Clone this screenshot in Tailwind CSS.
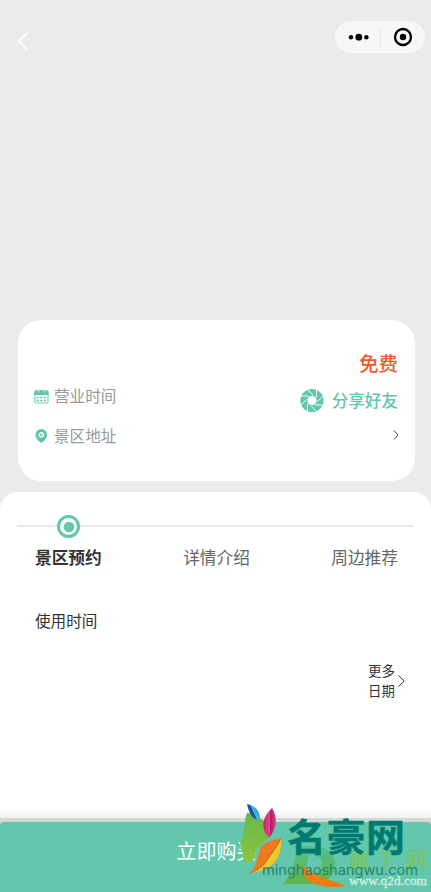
<!DOCTYPE html>
<html lang="zh-CN">
<head>
<meta charset="utf-8">
<meta name="viewport" content="width=device-width, initial-scale=1">
<title>景区预约</title>
<script src="https://cdn.jsdelivr.net/npm/@tailwindcss/browser@4"></script>
</head>
<body class="bg-[#ebebeb]">
<div class="relative flex h-[892px] w-[431px] flex-col overflow-hidden bg-[#ebebeb] font-['Noto_Sans_CJK_SC',sans-serif]">
  <header class="flex h-[320px] shrink-0 items-start justify-between pt-[21px] pr-[6px] pl-[17px]">
    <svg class="mt-[10px] h-5 w-3" viewBox="0 0 12 20" fill="none" stroke="#fff" stroke-width="1.7"><path d="M10.5 1.5 2 10l8.500 8.500"/></svg>
    <div class="flex h-8 w-[90px] items-center rounded-full bg-[#f7f7f7]">
      <svg class="h-8 w-[90px]" viewBox="0 0 90 32"><circle cx="16" cy="16.300" r="2.200"/><circle cx="23.800" cy="16.200" r="3.400"/><circle cx="31.400" cy="16.300" r="2.200"/><path d="M45.500 6v20" stroke="#e6e6e6"/><circle cx="68" cy="16" r="8" fill="none" stroke="#000" stroke-width="2.300"/><circle cx="68" cy="16" r="3.200"/></svg>
    </div>
  </header>

  <section class="mr-4 ml-[18px] flex h-[161px] shrink-0 flex-col rounded-[23px] bg-white pr-[17px] pl-4 pt-[28px]">
    <div class="flex h-[30px] items-center justify-end text-[19.500px] leading-[30px] font-medium text-[#ea5a2b]">免费</div>
    <div class="mt-[2px] flex h-10 items-center justify-between">
      <div class="flex -translate-y-[5px] items-center text-[15.600px] leading-6 font-normal text-[#999]">
        <svg class="mr-[5px] h-[15px] w-[15px] translate-y-px" viewBox="0 0 15 15"><rect x=".8" y="1.800" width="13.200" height="12.200" rx="1.500" fill="#fff" stroke="#7fd1bd" stroke-width="1.200"/><path d="M.3 6V3Q.3 1.500 2 1.500h11q1.500 0 1.500 1.500v3z" fill="#5fc6ac"/><path d="M4.500 0v3.500M10.500 0v3.500" stroke="#b8e6db" stroke-width="1.400"/><path d="M2.500 8.500h10M2.500 11.500h10" stroke="#6bcab2" stroke-width="1.700" stroke-dasharray="2.300 1.300"/></svg>营业时间
      </div>
      <div class="flex items-center text-[16.600px] leading-6 font-medium text-[#62c7ad]">
        <svg class="mr-2 h-6 w-6 translate-y-[.5px]" viewBox="-12 -12 24 24"><circle r="8.100" fill="none" stroke="#62c7ad" stroke-width="7"/><g stroke="#fff" stroke-width=".9"><path id="b" d="M4.500-3V-12"/><use href="#b" transform="rotate(45)"/><use href="#b" transform="rotate(90)"/><use href="#b" transform="rotate(135)"/><use href="#b" transform="rotate(180)"/><use href="#b" transform="rotate(225)"/><use href="#b" transform="rotate(270)"/><use href="#b" transform="rotate(315)"/></g></svg>分享好友
      </div>
    </div>
    <div class="flex h-[30px] items-center justify-between">
      <div class="flex items-center text-[15.600px] leading-6 font-normal text-[#999]">
        <svg class="mr-[5px] h-[15px] w-[15px] translate-y-[.5px]" viewBox="0 0 15 15"><path d="M7.300.5a5.900 5.900 0 0 1 5.900 5.900c0 3.100-3.200 6-5.900 8.100C4.600 12.400 1.400 9.500 1.400 6.400A5.900 5.900 0 0 1 7.300.5z" fill="#5fc6ac"/><circle cx="7.300" cy="6.300" r="2.100" fill="#7fd1bd" stroke="#fff" stroke-width="1.200"/></svg>景区地址
      </div>
      <svg class="-mr-px h-[10px] w-[6px]" viewBox="0 0 6 10" fill="none" stroke="#444"><path d="M1 .5 5 5 1 9.500"/></svg>
    </div>
  </section>

  <main class="mt-[11px] flex h-[400px] shrink-0 flex-col rounded-t-[18px] bg-white pt-[22px]">
    <div class="ml-[17px] flex h-6 w-[397px] items-center bg-[linear-gradient(#e9e9e9,#e9e9e9)] bg-[length:100%_2px] bg-[position:0_11px] bg-no-repeat pl-[39px]">
      <svg class="h-6 w-6" viewBox="0 0 24 24"><circle cx="12.500" cy="12.500" r="10" fill="#fff" stroke="#62c7ad" stroke-width="3"/><circle cx="13" cy="13" r="5.300" fill="#62c7ad"/></svg>
    </div>
    <nav class="mt-[7px] flex h-6 items-center justify-between pr-[33px] pl-[35px] text-[16.700px] leading-6 text-[#666]">
      <b class="font-bold text-[#333]">景区预约</b><span>详情介绍</span><span>周边推荐</span>
    </nav>
    <h2 class="mt-[39px] pl-[35px] text-[15.600px] leading-6 text-[#333]">使用时间</h2>
    <div class="mt-[28px] flex items-center justify-end gap-[3px] pr-[26px]">
      <p class="w-[27px] text-[13.400px] leading-5 text-[#333]">更多<br>日期</p>
      <svg class="h-3 w-[7px] translate-y-px" viewBox="0 0 7 12" fill="none" stroke="#333"><path d="M.5.500 6.200 6 .5 11.500"/></svg>
    </div>
  </main>

  <footer class="absolute inset-x-0 bottom-0 h-[84px]">
    <div class="h-[10px] bg-linear-to-b from-white to-[#f0f2f1]"></div>
    <div class="h-[74px] bg-[#d2dad7] pt-1">
      <button class="flex h-[70px] w-full justify-center rounded-t-[4px] bg-[#62c7ad] pt-[14px] pl-[2px] text-[20px] leading-[30px] text-white">立即购买</button>
    </div>
  </footer>

  <svg class="absolute top-[795px] left-[235px] h-[97px] w-[196px]" viewBox="235 795 196 97">
    <defs>
      <linearGradient id="face" x2="0" y2="1"><stop stop-color="#6ab84c"/><stop offset="1" stop-color="#8ac53c"/></linearGradient>
      <linearGradient id="blue" x1="0" y1=".8" x2="1" y2=".2"><stop stop-color="#124d91"/><stop offset=".48" stop-color="#15569b"/><stop offset=".54" stop-color="#45bce3"/><stop offset="1" stop-color="#1679bb"/></linearGradient>
      <linearGradient id="pink"><stop stop-color="#d3186f"/><stop offset=".5" stop-color="#e0468a"/><stop offset=".56" stop-color="#b01d68"/><stop offset="1" stop-color="#dc3a81"/></linearGradient>
      <linearGradient id="shape" x2="0" y2="1"><stop stop-color="#52bf94"/><stop offset="1" stop-color="#63b441"/></linearGradient>
    </defs>
    <path d="M293 846h16c16 0 26 6 26 18 0 13-9 20-25 20h-27c8-8 12-24 14-34zM309 855l-5 19c11 1 18-3 18-10 0-6-4-9-13-9" fill="url(#shape)" fill-rule="evenodd"/>
    <path d="M301 865c5 2 8 6 13 9 9 5 20 6 32 12-12 2-26 1-35-4-6-3-9-9-10-17" fill="#f27c11"/>
    <path d="M247 813c3-1 7 3 11 5 5 1 9 5 10 9l1 10-5 5c-5 4-8 7-9 12-1 5-2 8-5 8l-6-1-1-4-1-1 1-3-2-3 1-4-2-3 4-8-1-4c3-5 1-11 4-18" fill="url(#face)"/>
    <path d="M247 804c9 2 13 7 13 17-8-2-11-8-13-17" fill="url(#blue)"/>
    <path d="M272 808c6 10 5 20-3 30-8-9-8-20 3-30" fill="url(#pink)"/>
    <path d="M281 838c1 20-7 32-31 35 9-10 7-20 12-27 4-5 12-6 19-8" fill="#ee7a20"/>
    <path d="M281 838c1 20-7 32-31 35 12-4 15-10 20-17 4-6 8-11 11-18" fill="#f0c92d"/>
    <path d="M281 838c-3 7-7 12-11 18-5 7-8 13-20 17" fill="none" stroke="#b55316" stroke-width=".7"/>
    <g font-family="'Noto Sans CJK SC',sans-serif" font-size="21" fill="#7fc257">
      <text x="349" y="868">趣</text><text x="377" y="867" font-size="19">丁</text><text x="406" y="867">网</text>
    </g>
    <text transform="translate(287 851) scale(1 .97)" font-family="'Noto Sans CJK SC',sans-serif" font-size="39" font-weight="700" textLength="118" fill="#007a70" stroke="#007a70" stroke-width=".5">名豪网</text>
    <text x="262" y="875" font-family="Inter,sans-serif" font-size="14" textLength="156" lengthAdjust="spacingAndGlyphs" fill="#25836e">minghaoshangwu.com</text>
    <text x="349" y="885" font-family="'Liberation Serif',serif" font-size="13.500" textLength="78" lengthAdjust="spacingAndGlyphs" fill="#d9eee6" stroke="#d9eee6" stroke-width=".3">www.q2d.com</text>
  </svg>
</div>
</body>
</html>
